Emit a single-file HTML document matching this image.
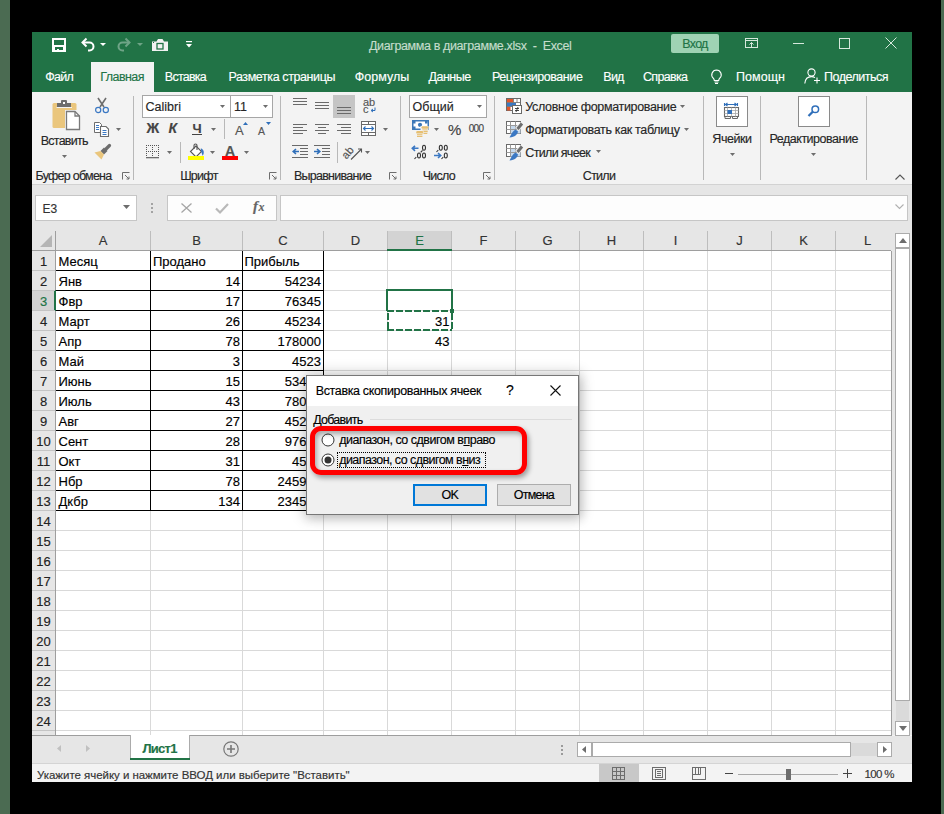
<!DOCTYPE html>
<html><head><meta charset="utf-8">
<style>
*{margin:0;padding:0;box-sizing:border-box}
html,body{width:944px;height:814px;overflow:hidden;background:#000}
body{position:relative;font-family:"Liberation Sans",sans-serif;font-size:12px;color:#262626}
.a{position:absolute}
svg.a{overflow:visible}
.t{position:absolute;white-space:nowrap;line-height:1;-webkit-text-stroke:0.15px currentColor}
</style></head><body>
<div class="a" style="left:0px;top:0px;width:10px;height:814px;background:#4b6b52"></div>
<div class="a" style="left:941px;top:0px;width:3px;height:814px;background:#4b6b52"></div>
<div class="a" style="left:32px;top:32px;width:880px;height:750px;background:#f3f3f3"></div>
<div class="a" style="left:32px;top:32px;width:880px;height:60px;background:#217346"></div>
<div class="a" style="left:91px;top:62px;width:63px;height:30px;background:#f3f3f3"></div>
<div class="a" style="left:32px;top:184px;width:880px;height:1px;background:#d2d2d2"></div>
<div class="a" style="left:32px;top:185px;width:880px;height:550px;background:#e6e6e6"></div>
<div class="a" style="left:32px;top:763px;width:880px;height:1px;background:#d4d4d4"></div>
<div class="a" style="left:32px;top:764px;width:880px;height:18px;background:#f3f3f3"></div>
<svg class="a" style="left:52px;top:38px;" width="14" height="14" viewBox="0 0 14 14"><rect x="1" y="1" width="12" height="12" fill="none" stroke="#fff" stroke-width="2"/><rect x="2" y="7" width="10" height="2" fill="#fff"/><rect x="2" y="9" width="1" height="3" fill="#fff"/><rect x="11" y="9" width="1" height="3" fill="#fff"/><rect x="5" y="11" width="2" height="1" fill="#fff"/></svg>
<svg class="a" style="left:80px;top:37px;" width="16" height="15" viewBox="0 0 16 15"><path d="M3 5.5H9.5A4 4 0 0 1 9.5 13.5H8" fill="none" stroke="#fff" stroke-width="2"/><path d="M6.5 1.5L2.5 5.5L6.5 9.5" fill="none" stroke="#fff" stroke-width="2"/></svg>
<svg class="a" style="left:100px;top:43px;" width="6" height="3" viewBox="0 0 6 3"><path d="M0 0H6L3 3Z" fill="#fff"/></svg>
<svg class="a" style="left:116px;top:37px;opacity:.35" width="16" height="15" viewBox="0 0 16 15"><path d="M13 5.5H6.5A4 4 0 0 0 6.5 13.5H8" fill="none" stroke="#fff" stroke-width="2"/><path d="M9.5 1.5L13.5 5.5L9.5 9.5" fill="none" stroke="#fff" stroke-width="2"/></svg>
<svg class="a" style="left:137px;top:43px;opacity:.35" width="6" height="3" viewBox="0 0 6 3"><path d="M0 0H6L3 3Z" fill="#fff"/></svg>
<svg class="a" style="left:152px;top:39px;" width="16" height="12" viewBox="0 0 16 12"><path d="M0 2.5H4.5L6 0H10.5L12 2.5H16V12H0Z" fill="#f2f2f2"/><rect x="5" y="4.5" width="6" height="5.5" fill="none" stroke="#217346" stroke-width="1.3"/><rect x="1" y="3" width="1" height="1" fill="#217346"/></svg>
<svg class="a" style="left:186px;top:41px;" width="6" height="7" viewBox="0 0 6 7"><rect x="0" y="0" width="6" height="1.2" fill="#fff"/><path d="M0 3H6L3 6.5Z" fill="#fff"/></svg>
<div class="t" id="tw0" style="left:369px;top:40px;font-size:12.5px;color:#c4ddcc;;letter-spacing:-0.380px">Диаграмма в диаграмме.xlsx&nbsp; - &nbsp;Excel</div>
<div class="a" style="left:671px;top:34px;width:48px;height:19px;background:#9fd3b4;border-radius:2px"></div>
<div class="t" id="tw1" style="left:495px;width:400px;text-align:center;top:38px;font-size:12.5px;color:#217346;;letter-spacing:-0.750px">Вход</div>
<svg class="a" style="left:745px;top:38px;" width="14" height="10" viewBox="0 0 14 10"><rect x="0.5" y="0.5" width="12" height="9" fill="none" stroke="#d6e8dc"/><path d="M1 2.5H12" stroke="#d6e8dc"/><path d="M6.5 9V4.5M4.5 6.5L6.5 4.5L8.5 6.5" fill="none" stroke="#d6e8dc"/></svg>
<div class="a" style="left:793px;top:43px;width:11px;height:1px;background:#d6e8dc"></div>
<svg class="a" style="left:839px;top:38px;" width="11" height="11" viewBox="0 0 11 11"><rect x="0.5" y="0.5" width="10" height="10" fill="none" stroke="#d6e8dc"/></svg>
<svg class="a" style="left:885px;top:37px;" width="12" height="12" viewBox="0 0 12 12"><path d="M0.5 0.5L11.5 11.5M11.5 0.5L0.5 11.5" stroke="#d6e8dc" stroke-width="1"/></svg>
<div class="t" id="tw2" style="left:45.3px;top:71px;font-size:12.5px;color:#ffffff;;letter-spacing:-0.750px">Файл</div>
<div class="t" id="tw3" style="left:164.8px;top:71px;font-size:12.5px;color:#ffffff;;letter-spacing:-0.750px">Вставка</div>
<div class="t" id="tw4" style="left:228.4px;top:71px;font-size:12.5px;color:#ffffff;;letter-spacing:-0.400px">Разметка страницы</div>
<div class="t" id="tw5" style="left:354.8px;top:71px;font-size:12.5px;color:#ffffff;;letter-spacing:0.000px">Формулы</div>
<div class="t" id="tw6" style="left:428.5px;top:71px;font-size:12.5px;color:#ffffff;;letter-spacing:-0.500px">Данные</div>
<div class="t" id="tw7" style="left:492px;top:71px;font-size:12.5px;color:#ffffff;;letter-spacing:-0.438px">Рецензирование</div>
<div class="t" id="tw8" style="left:603.3px;top:71px;font-size:12.5px;color:#ffffff;;letter-spacing:-0.750px">Вид</div>
<div class="t" id="tw9" style="left:642.9px;top:71px;font-size:12.5px;color:#ffffff;;letter-spacing:-0.650px">Справка</div>
<div class="t" id="tw10" style="left:736px;top:71px;font-size:12.5px;color:#ffffff;;letter-spacing:0.040px">Помощн</div>
<div class="t" id="tw11" style="left:824px;top:71px;font-size:12.5px;color:#ffffff;;letter-spacing:-0.500px">Поделиться</div>
<div class="t" id="tw12" style="left:100.3px;top:71px;font-size:12.5px;color:#217346;;letter-spacing:-0.567px">Главная</div>
<svg class="a" style="left:710px;top:69px;" width="13" height="15" viewBox="0 0 13 15"><path d="M6.5 1A4.8 4.8 0 0 0 3.2 9.2C4 10 4.3 10.6 4.3 11.5H8.7C8.7 10.6 9 10 9.8 9.2A4.8 4.8 0 0 0 6.5 1Z" fill="none" stroke="#fff" stroke-width="1.1"/><path d="M4.5 13H8.5M5 14.5H8" stroke="#fff" stroke-width="1"/></svg>
<svg class="a" style="left:804px;top:68px;" width="17" height="16" viewBox="0 0 17 16"><circle cx="7.5" cy="4.5" r="3.6" fill="none" stroke="#fff" stroke-width="1.1"/><path d="M0.8 15.5C1.2 11 3.8 8.6 7.5 8.6C9 8.6 10 9 11 9.6" fill="none" stroke="#fff" stroke-width="1.1"/><path d="M13 9.5V15.5M10 12.5H16" stroke="#fff" stroke-width="1.1"/></svg>
<svg class="a" style="left:52px;top:100px;" width="28" height="30" viewBox="0 0 28 30"><rect x="0.5" y="3" width="24" height="25" rx="1.5" fill="#eac67d"/><rect x="5" y="3" width="14" height="4" fill="#6d6d6d"/><rect x="9" y="0" width="6" height="4" rx="1" fill="#6d6d6d"/><rect x="11" y="2" width="2" height="2" fill="#fff"/><path d="M4.5 7.5H20" stroke="#f3f3f3" stroke-width="1"/><path d="M13 10H28V30H13Z" fill="#f3f3f3"/><path d="M14.5 11.5H23L27.5 16V29.5H14.5Z" fill="#fff" stroke="#7a7a7a" stroke-width="1.3"/><path d="M23 11.5V16H27.5" fill="none" stroke="#7a7a7a" stroke-width="1.3"/></svg>
<div class="t" id="tw13" style="left:-135.8px;width:400px;text-align:center;top:135px;font-size:12.5px;color:#262626;;letter-spacing:-0.750px">Вставить</div>
<svg class="a" style="left:62px;top:155px;" width="5" height="3" viewBox="0 0 5 3"><path d="M0 0H5L2.5 3Z" fill="#6d6d6d"/></svg>
<svg class="a" style="left:94px;top:97px;" width="16" height="16" viewBox="0 0 16 16"><path d="M4 1L10 10M12 1L6 10" stroke="#6d6d6d" stroke-width="1.6"/><circle cx="4.2" cy="13" r="2.6" fill="none" stroke="#3b78c3" stroke-width="1.2"/><circle cx="11.8" cy="13" r="2.6" fill="none" stroke="#3b78c3" stroke-width="1.2"/></svg>
<svg class="a" style="left:94px;top:122px;" width="16" height="15" viewBox="0 0 16 15"><path d="M0.5 0.5H5.5L7.5 2.5V10.5H0.5Z" fill="#fff" stroke="#6d6d6d" stroke-width="1"/><path d="M2 3.5H5M2 5.5H5M2 7.5H5" stroke="#3b78c3" stroke-width="1"/><path d="M6.5 4.5H12L14.5 7V14.5H6.5Z" fill="#fff" stroke="#6d6d6d" stroke-width="1.1"/><path d="M8.5 8.5H12.5M8.5 10.5H12.5M8.5 12.5H12.5" stroke="#3b78c3" stroke-width="1"/></svg>
<svg class="a" style="left:116px;top:128px;" width="5" height="3" viewBox="0 0 5 3"><path d="M0 0H5L2.5 3Z" fill="#6d6d6d"/></svg>
<svg class="a" style="left:94px;top:144px;" width="17" height="16" viewBox="0 0 17 16"><path d="M12 5L15.5 1.5" stroke="#6d6d6d" stroke-width="3.2" stroke-linecap="round"/><path d="M6.5 7L10 3.5L13.5 7L10 10.5Z" fill="#6d6d6d"/><path d="M0.5 8.5L6.5 7L10 10.5L7.5 15.5Z" fill="#eac67d"/></svg>
<div class="t" id="tw14" style="left:-126.5px;width:400px;text-align:center;top:170px;font-size:12.5px;color:#262626;;letter-spacing:-0.750px">Буфер обмена</div>
<svg class="a" style="left:122px;top:172px;" width="8" height="8" viewBox="0 0 8 8"><path d="M0.5 7.5V0.5H7.5" fill="none" stroke="#6d6d6d" stroke-width="1"/><path d="M3 3L7 7M7 4.5V7H4.5" fill="none" stroke="#6d6d6d" stroke-width="1"/></svg>
<div class="a" style="left:133px;top:96px;width:1px;height:84px;background:#b8b8b8"></div>
<div class="a" style="left:142px;top:95px;width:131px;height:23px;background:#fff;border:1px solid #a6a6a6"></div>
<div class="a" style="left:230px;top:95px;width:1px;height:23px;background:#a6a6a6"></div>
<div class="t" style="left:145.5px;top:101px;font-size:12.5px;color:#262626;">Calibri</div>
<svg class="a" style="left:220px;top:105px;" width="5" height="3" viewBox="0 0 5 3"><path d="M0 0H5L2.5 3Z" fill="#6d6d6d"/></svg>
<div class="t" style="left:234px;top:101px;font-size:12.5px;color:#262626;">11</div>
<svg class="a" style="left:263px;top:105px;" width="5" height="3" viewBox="0 0 5 3"><path d="M0 0H5L2.5 3Z" fill="#6d6d6d"/></svg>
<div class="t" style="left:146.5px;top:121px;font-size:14px;color:#444;font-weight:bold">Ж</div>
<div class="t" style="left:168.5px;top:121px;font-size:14px;color:#444;font-weight:bold;font-style:italic">К</div>
<div class="t" style="left:192.5px;top:122px;font-size:13px;color:#444;font-weight:bold">Ч</div>
<div class="a" style="left:192px;top:134px;width:10px;height:1px;background:#444"></div>
<svg class="a" style="left:211px;top:128px;" width="5" height="3" viewBox="0 0 5 3"><path d="M0 0H5L2.5 3Z" fill="#6d6d6d"/></svg>
<div class="a" style="left:224px;top:119px;width:1px;height:20px;background:#b8b8b8"></div>
<div class="t" style="left:235px;top:124px;font-size:13px;color:#555;">A</div>
<svg class="a" style="left:243px;top:122px;" width="5" height="3" viewBox="0 0 5 3"><path d="M0 3H5L2.5 0Z" fill="#2f6fba"/></svg>
<div class="t" style="left:258px;top:126px;font-size:10.5px;color:#555;">A</div>
<svg class="a" style="left:266px;top:122px;" width="5" height="3" viewBox="0 0 5 3"><path d="M0 0H5L2.5 3Z" fill="#2f6fba"/></svg>
<svg class="a" style="left:146px;top:145px;" width="14" height="14" viewBox="0 0 14 14"><rect x="0" y="0" width="1" height="1" fill="#555"/><rect x="0" y="6" width="1" height="1" fill="#555"/><rect x="2" y="0" width="1" height="1" fill="#555"/><rect x="2" y="6" width="1" height="1" fill="#555"/><rect x="4" y="0" width="1" height="1" fill="#555"/><rect x="4" y="6" width="1" height="1" fill="#555"/><rect x="6" y="0" width="1" height="1" fill="#555"/><rect x="6" y="6" width="1" height="1" fill="#555"/><rect x="8" y="0" width="1" height="1" fill="#555"/><rect x="8" y="6" width="1" height="1" fill="#555"/><rect x="10" y="0" width="1" height="1" fill="#555"/><rect x="10" y="6" width="1" height="1" fill="#555"/><rect x="12" y="0" width="1" height="1" fill="#555"/><rect x="12" y="6" width="1" height="1" fill="#555"/><rect x="0" y="2" width="1" height="1" fill="#555"/><rect x="0" y="4" width="1" height="1" fill="#555"/><rect x="0" y="8" width="1" height="1" fill="#555"/><rect x="0" y="10" width="1" height="1" fill="#555"/><rect x="6" y="2" width="1" height="1" fill="#555"/><rect x="6" y="4" width="1" height="1" fill="#555"/><rect x="6" y="8" width="1" height="1" fill="#555"/><rect x="6" y="10" width="1" height="1" fill="#555"/><rect x="12" y="2" width="1" height="1" fill="#555"/><rect x="12" y="4" width="1" height="1" fill="#555"/><rect x="12" y="8" width="1" height="1" fill="#555"/><rect x="12" y="10" width="1" height="1" fill="#555"/><rect x="0" y="12" width="13" height="1.3" fill="#6d6d6d"/></svg>
<svg class="a" style="left:167px;top:151px;" width="5" height="3" viewBox="0 0 5 3"><path d="M0 0H5L2.5 3Z" fill="#6d6d6d"/></svg>
<div class="a" style="left:180px;top:142px;width:1px;height:21px;background:#b8b8b8"></div>
<svg class="a" style="left:188px;top:143px;" width="17" height="18" viewBox="0 0 17 18"><path d="M8 3L2.5 8.5L8 14L13.5 8.5Z" fill="#fff" stroke="#555" stroke-width="1.1"/><path d="M6 6V2.5A1.5 1.5 0 0 1 9 2.5V7" fill="none" stroke="#555" stroke-width="1.1"/><path d="M12.8 5.2C15.8 6.5 16.8 9.5 14.6 12.8L13.2 8.5Z" fill="#3b78c3"/><rect x="0" y="13" width="16" height="4" fill="#ffff00"/></svg>
<svg class="a" style="left:210px;top:151px;" width="5" height="3" viewBox="0 0 5 3"><path d="M0 0H5L2.5 3Z" fill="#6d6d6d"/></svg>
<div class="t" style="left:225px;top:144px;font-size:14px;color:#555;font-weight:bold">A</div>
<div class="a" style="left:222px;top:156px;width:16px;height:4px;background:#ff0000"></div>
<svg class="a" style="left:244px;top:151px;" width="5" height="3" viewBox="0 0 5 3"><path d="M0 0H5L2.5 3Z" fill="#6d6d6d"/></svg>
<div class="t" id="tw15" style="left:-1.0999999999999943px;width:400px;text-align:center;top:170px;font-size:12.5px;color:#262626;;letter-spacing:-0.725px">Шрифт</div>
<svg class="a" style="left:269px;top:172px;" width="8" height="8" viewBox="0 0 8 8"><path d="M0.5 7.5V0.5H7.5" fill="none" stroke="#6d6d6d" stroke-width="1"/><path d="M3 3L7 7M7 4.5V7H4.5" fill="none" stroke="#6d6d6d" stroke-width="1"/></svg>
<div class="a" style="left:280px;top:96px;width:1px;height:84px;background:#b8b8b8"></div>
<div class="a" style="left:293px;top:98px;width:14px;height:1px;background:#6a6a6a"></div>
<div class="a" style="left:293px;top:101px;width:14px;height:1px;background:#6a6a6a"></div>
<div class="a" style="left:293px;top:104px;width:14px;height:1px;background:#6a6a6a"></div>
<div class="a" style="left:315px;top:102px;width:14px;height:1px;background:#6a6a6a"></div>
<div class="a" style="left:315px;top:105px;width:14px;height:1px;background:#6a6a6a"></div>
<div class="a" style="left:315px;top:108px;width:14px;height:1px;background:#6a6a6a"></div>
<div class="a" style="left:333px;top:95px;width:22px;height:23px;background:#c5c5c5"></div>
<div class="a" style="left:337px;top:107px;width:14px;height:1px;background:#6a6a6a"></div>
<div class="a" style="left:337px;top:110px;width:14px;height:1px;background:#6a6a6a"></div>
<div class="a" style="left:337px;top:113px;width:14px;height:1px;background:#6a6a6a"></div>
<div class="t" style="left:363px;top:97px;font-size:11px;color:#555;">ab</div>
<div class="t" style="left:363px;top:104px;font-size:11px;color:#555;">c</div>
<svg class="a" style="left:370px;top:107px;" width="6" height="6" viewBox="0 0 6 6"><path d="M5 0.5V3.5H1.5M3 2L1 3.5L3 5" fill="none" stroke="#2f6fba" stroke-width="1"/></svg>
<div class="a" style="left:293px;top:124px;width:14px;height:1px;background:#6a6a6a"></div>
<div class="a" style="left:293px;top:127px;width:10px;height:1px;background:#6a6a6a"></div>
<div class="a" style="left:293px;top:130px;width:14px;height:1px;background:#6a6a6a"></div>
<div class="a" style="left:293px;top:133px;width:10px;height:1px;background:#6a6a6a"></div>
<div class="a" style="left:315px;top:124px;width:14px;height:1px;background:#6a6a6a"></div>
<div class="a" style="left:318px;top:127px;width:8px;height:1px;background:#6a6a6a"></div>
<div class="a" style="left:315px;top:130px;width:14px;height:1px;background:#6a6a6a"></div>
<div class="a" style="left:318px;top:133px;width:8px;height:1px;background:#6a6a6a"></div>
<div class="a" style="left:337px;top:124px;width:14px;height:1px;background:#6a6a6a"></div>
<div class="a" style="left:341px;top:127px;width:10px;height:1px;background:#6a6a6a"></div>
<div class="a" style="left:337px;top:130px;width:14px;height:1px;background:#6a6a6a"></div>
<div class="a" style="left:341px;top:133px;width:10px;height:1px;background:#6a6a6a"></div>
<svg class="a" style="left:361px;top:121px;" width="15" height="15" viewBox="0 0 15 15"><rect x="0.5" y="0.5" width="14" height="14" fill="#fff" stroke="#6a6a6a"/><path d="M0.5 3.5H14.5M0.5 11.5H14.5M7.5 0.5V3.5M7.5 11.5V14.5" stroke="#6a6a6a"/><path d="M2.5 7.5H12.5M4.5 5.5L2.5 7.5L4.5 9.5M10.5 5.5L12.5 7.5L10.5 9.5" fill="none" stroke="#2f6fba" stroke-width="1.1"/></svg>
<svg class="a" style="left:383px;top:128px;" width="5" height="3" viewBox="0 0 5 3"><path d="M0 0H5L2.5 3Z" fill="#6d6d6d"/></svg>
<div class="a" style="left:292px;top:145px;width:16px;height:1px;background:#6a6a6a"></div>
<div class="a" style="left:300px;top:148px;width:8px;height:1px;background:#6a6a6a"></div>
<div class="a" style="left:300px;top:151px;width:8px;height:1px;background:#6a6a6a"></div>
<div class="a" style="left:300px;top:154px;width:8px;height:1px;background:#6a6a6a"></div>
<div class="a" style="left:292px;top:157px;width:16px;height:1px;background:#6a6a6a"></div>
<svg class="a" style="left:292px;top:148px;" width="7" height="7" viewBox="0 0 7 7"><path d="M7 3.5H1.5M4 1L1.2 3.5L4 6" fill="none" stroke="#2f6fba" stroke-width="1.6"/></svg>
<div class="a" style="left:314px;top:145px;width:16px;height:1px;background:#6a6a6a"></div>
<div class="a" style="left:322px;top:148px;width:8px;height:1px;background:#6a6a6a"></div>
<div class="a" style="left:322px;top:151px;width:8px;height:1px;background:#6a6a6a"></div>
<div class="a" style="left:322px;top:154px;width:8px;height:1px;background:#6a6a6a"></div>
<div class="a" style="left:314px;top:157px;width:16px;height:1px;background:#6a6a6a"></div>
<svg class="a" style="left:314px;top:148px;" width="7" height="7" viewBox="0 0 7 7"><path d="M0 3.5H5.5M3 1L5.8 3.5L3 6" fill="none" stroke="#2f6fba" stroke-width="1.6"/></svg>
<div class="a" style="left:337px;top:142px;width:1px;height:21px;background:#b8b8b8"></div>
<div class="t" style="left:343px;top:145px;font-size:11px;color:#555;transform:rotate(-50deg);transform-origin:8px 8px">ab</div>
<svg class="a" style="left:350px;top:148px;" width="13" height="12" viewBox="0 0 13 12"><path d="M1 11.5L11.5 1M8 1H11.5V4.5" fill="none" stroke="#555" stroke-width="1.1"/></svg>
<svg class="a" style="left:365px;top:151px;" width="5" height="3" viewBox="0 0 5 3"><path d="M0 0H5L2.5 3Z" fill="#6d6d6d"/></svg>
<div class="t" id="tw16" style="left:132.5px;width:400px;text-align:center;top:170px;font-size:12.5px;color:#262626;;letter-spacing:-0.736px">Выравнивание</div>
<svg class="a" style="left:389px;top:172px;" width="8" height="8" viewBox="0 0 8 8"><path d="M0.5 7.5V0.5H7.5" fill="none" stroke="#6d6d6d" stroke-width="1"/><path d="M3 3L7 7M7 4.5V7H4.5" fill="none" stroke="#6d6d6d" stroke-width="1"/></svg>
<div class="a" style="left:400px;top:96px;width:1px;height:84px;background:#b8b8b8"></div>
<div class="a" style="left:409px;top:95px;width:78px;height:23px;background:#fff;border:1px solid #a6a6a6"></div>
<div class="t" style="left:412.5px;top:101px;font-size:12.5px;color:#262626;">Общий</div>
<svg class="a" style="left:477px;top:105px;" width="5" height="3" viewBox="0 0 5 3"><path d="M0 0H5L2.5 3Z" fill="#6d6d6d"/></svg>
<svg class="a" style="left:412px;top:120px;" width="17" height="18" viewBox="0 0 17 18"><rect x="0.75" y="0.75" width="15.5" height="8.5" fill="#fff" stroke="#3c78b8" stroke-width="1.5"/><rect x="1" y="1" width="2.5" height="2.5" fill="#3c78b8"/><rect x="13" y="1" width="2.5" height="2.5" fill="#3c78b8"/><rect x="1" y="6.5" width="2.5" height="2.5" fill="#3c78b8"/><circle cx="8" cy="4.8" r="2.1" fill="#3c78b8"/><rect x="8.5" y="6" width="8" height="11" fill="#f3f3f3"/><rect x="9.5" y="6.2" width="7" height="2.6" rx="1.2" fill="#e6bf72"/><rect x="10.3" y="9.4" width="5.4" height="1" fill="#e6bf72"/><rect x="10.3" y="11" width="5.4" height="1.3" fill="#e6bf72"/><rect x="10.8" y="13" width="4.5" height="1" fill="#e6bf72"/><rect x="3.5" y="10.5" width="8" height="7.5" fill="#f3f3f3"/><rect x="4.2" y="11" width="7" height="2.6" rx="1.2" fill="#e6bf72"/><rect x="5" y="14.2" width="5.4" height="1" fill="#e6bf72"/><rect x="5" y="15.8" width="5.4" height="1.2" fill="#e6bf72"/></svg>
<svg class="a" style="left:434px;top:128px;" width="5" height="3" viewBox="0 0 5 3"><path d="M0 0H5L2.5 3Z" fill="#6d6d6d"/></svg>
<div class="t" style="left:448px;top:122px;font-size:15px;color:#444;">%</div>
<div class="t" id="tw17" style="left:468.8px;top:124px;font-size:10px;color:#444;transform:scaleY(1.1);transform-origin:0 100%;letter-spacing:-0.750px">000</div>
<svg class="a" style="left:408px;top:140px;" width="44" height="22" viewBox="0 0 44 22"><path d="M10.5 8.3H4.5M7 5.8L4.3 8.3L7 10.8" fill="none" stroke="#3b78c3" stroke-width="1.6"/><ellipse cx="16" cy="7.8" rx="1.5" ry="2.5" fill="none" stroke="#333" stroke-width="1.1"/><path d="M12.7 12.3L14.5 10.3" stroke="#333" stroke-width="1.1"/><path d="M6.5 19L8.3 17" stroke="#333" stroke-width="1.1"/><ellipse cx="11" cy="15.5" rx="1.5" ry="2.5" fill="none" stroke="#333" stroke-width="1.1"/><ellipse cx="16" cy="15.5" rx="1.5" ry="2.5" fill="none" stroke="#333" stroke-width="1.1"/><path d="M28.5 12L30.3 10" stroke="#333" stroke-width="1.1"/><ellipse cx="32.8" cy="7.8" rx="1.5" ry="2.5" fill="none" stroke="#333" stroke-width="1.1"/><ellipse cx="37.8" cy="7.8" rx="1.5" ry="2.5" fill="none" stroke="#333" stroke-width="1.1"/><path d="M26 15.5H32.5M30 13L32.7 15.5L30 18" fill="none" stroke="#3b78c3" stroke-width="1.6"/><path d="M33.5 19L35.3 17" stroke="#333" stroke-width="1.1"/><ellipse cx="37.8" cy="15.5" rx="1.5" ry="2.5" fill="none" stroke="#333" stroke-width="1.1"/></svg>
<div class="t" id="tw18" style="left:238.8px;width:400px;text-align:center;top:170px;font-size:12.5px;color:#262626;;letter-spacing:-0.750px">Число</div>
<svg class="a" style="left:483px;top:172px;" width="8" height="8" viewBox="0 0 8 8"><path d="M0.5 7.5V0.5H7.5" fill="none" stroke="#6d6d6d" stroke-width="1"/><path d="M3 3L7 7M7 4.5V7H4.5" fill="none" stroke="#6d6d6d" stroke-width="1"/></svg>
<div class="a" style="left:494px;top:96px;width:1px;height:84px;background:#b8b8b8"></div>
<svg class="a" style="left:506px;top:98px;" width="17" height="16" viewBox="0 0 17 16"><rect x="0.5" y="0.5" width="14" height="12" fill="#fff" stroke="#6a6a6a"/><rect x="1" y="1" width="6" height="3.5" fill="#e2562b"/><rect x="1" y="5" width="9" height="3.5" fill="#3b78c3"/><rect x="1" y="9" width="3.5" height="3.5" fill="#e2562b"/><path d="M7.5 1V4.5M11 1V4.5M0.5 4.5H14.5M0.5 8.5H7" stroke="#6a6a6a" stroke-width="0.8"/><rect x="6.5" y="7.5" width="9" height="8" fill="#fff" stroke="#6a6a6a"/><path d="M9 10.5H13M9 12.5H13M12 9L10 14" stroke="#333" stroke-width="0.9"/></svg>
<div class="t" id="tw19" style="left:525.3px;top:101px;font-size:12.5px;color:#262626;;letter-spacing:-0.350px">Условное форматирование</div>
<svg class="a" style="left:680px;top:105px;" width="5" height="3" viewBox="0 0 5 3"><path d="M0 0H5L2.5 3Z" fill="#6d6d6d"/></svg>
<svg class="a" style="left:506px;top:121px;" width="17" height="17" viewBox="0 0 17 17"><rect x="0.5" y="0.5" width="14" height="12" fill="#fff" stroke="#6a6a6a"/><rect x="4.5" y="4.5" width="10" height="8" fill="#c5d9ee"/><path d="M4.5 0.5V12.5M9.5 0.5V12.5M0.5 4.5H14.5M0.5 8.5H14.5" stroke="#9a9a9a" stroke-width="1"/><path d="M16 2.5L11 8.5" stroke="#f3f3f3" stroke-width="5"/><path d="M16 2.5L11.5 8" stroke="#6d6d6d" stroke-width="3"/><path d="M9.5 8.5L12 10.5C11.5 13.5 9 16 3.5 16.5C5.5 13 6.5 10 9.5 8.5Z" fill="#3b78c3"/></svg>
<div class="t" id="tw20" style="left:525.3px;top:124px;font-size:12.5px;color:#262626;;letter-spacing:-0.333px">Форматировать как таблицу</div>
<svg class="a" style="left:684px;top:128px;" width="5" height="3" viewBox="0 0 5 3"><path d="M0 0H5L2.5 3Z" fill="#6d6d6d"/></svg>
<svg class="a" style="left:506px;top:144px;" width="17" height="17" viewBox="0 0 17 17"><rect x="0.5" y="0.5" width="14" height="12" fill="#fff" stroke="#6a6a6a"/><rect x="4.5" y="4.5" width="10" height="8" fill="#c5d9ee"/><path d="M4.5 0.5V12.5M9.5 0.5V12.5M0.5 4.5H14.5M0.5 8.5H14.5" stroke="#9a9a9a" stroke-width="1"/><path d="M16 2.5L11 8.5" stroke="#f3f3f3" stroke-width="5"/><path d="M16 2.5L11.5 8" stroke="#6d6d6d" stroke-width="3"/><path d="M9.5 8.5L12 10.5C11.5 13.5 9 16 3.5 16.5C5.5 13 6.5 10 9.5 8.5Z" fill="#3b78c3"/></svg>
<div class="t" id="tw21" style="left:525.3px;top:147px;font-size:12.5px;color:#262626;;letter-spacing:-0.670px">Стили ячеек</div>
<svg class="a" style="left:596px;top:150px;" width="5" height="3" viewBox="0 0 5 3"><path d="M0 0H5L2.5 3Z" fill="#6d6d6d"/></svg>
<div class="t" id="tw22" style="left:399px;width:400px;text-align:center;top:170px;font-size:12.5px;color:#262626;;letter-spacing:-0.750px">Стили</div>
<div class="a" style="left:703px;top:96px;width:1px;height:84px;background:#b8b8b8"></div>
<div class="a" style="left:716px;top:96px;width:32px;height:31px;background:#fff;border:1px solid #8a8a8a"></div>
<svg class="a" style="left:724px;top:103px;" width="16" height="18" viewBox="0 0 16 18"><path d="M0.5 0V3M13.5 0V3M1.5 1.5H12.5M3.5 0L1.5 1.5L3.5 3M10.5 0L12.5 1.5L10.5 3" fill="none" stroke="#2f6fba" stroke-width="1.1"/><rect x="0.5" y="4.5" width="14" height="9" fill="#fff" stroke="#6a6a6a" stroke-width="1.1"/><path d="M3.5 4.5V13.5M7.5 4.5V13.5M11.5 4.5V13.5M0.5 7.5H14.5M0.5 10.5H14.5" stroke="#aaa" stroke-width="0.8"/><rect x="3.5" y="7" width="4.5" height="4" fill="#2f6fba"/><path d="M1 14V15.5H6.5V14M8.5 14V15.5H13.5V14" fill="none" stroke="#6a6a6a"/></svg>
<div class="t" id="tw23" style="left:531.9px;width:400px;text-align:center;top:133px;font-size:12.5px;color:#262626;;letter-spacing:-0.480px">Ячейки</div>
<svg class="a" style="left:730px;top:153px;" width="5" height="3" viewBox="0 0 5 3"><path d="M0 0H5L2.5 3Z" fill="#6d6d6d"/></svg>
<div class="a" style="left:760px;top:96px;width:1px;height:84px;background:#b8b8b8"></div>
<div class="a" style="left:798px;top:96px;width:32px;height:31px;background:#fff;border:1px solid #8a8a8a"></div>
<svg class="a" style="left:806px;top:104px;" width="14" height="14" viewBox="0 0 14 14"><circle cx="9.3" cy="5.2" r="3.3" fill="none" stroke="#2f6fba" stroke-width="1.5"/><path d="M7 7.5L2.5 12" stroke="#2f6fba" stroke-width="2.3"/></svg>
<div class="t" id="tw24" style="left:613.7px;width:400px;text-align:center;top:133px;font-size:12.5px;color:#262626;;letter-spacing:-0.492px">Редактирование</div>
<svg class="a" style="left:811px;top:153px;" width="5" height="3" viewBox="0 0 5 3"><path d="M0 0H5L2.5 3Z" fill="#6d6d6d"/></svg>
<div class="a" style="left:866px;top:96px;width:1px;height:84px;background:#b8b8b8"></div>
<svg class="a" style="left:895px;top:174px;" width="10" height="6" viewBox="0 0 10 6"><path d="M0.5 5.5L5 1L9.5 5.5" fill="none" stroke="#555" stroke-width="1.1"/></svg>
<div class="a" style="left:35px;top:195px;width:102px;height:26px;background:#fff;border:1px solid #c6c6c6"></div>
<div class="t" style="left:42.5px;top:203px;font-size:12px;color:#333;">E3</div>
<svg class="a" style="left:123px;top:205px;" width="7" height="4" viewBox="0 0 7 4"><path d="M0 0H7L3.5 4Z" fill="#6d6d6d"/></svg>
<div class="a" style="left:151px;top:203px;width:2px;height:2px;background:#a3a3a3"></div>
<div class="a" style="left:151px;top:207px;width:2px;height:2px;background:#a3a3a3"></div>
<div class="a" style="left:151px;top:211px;width:2px;height:2px;background:#a3a3a3"></div>
<div class="a" style="left:167px;top:195px;width:110px;height:26px;background:#fdfdfd;border:1px solid #c6c6c6"></div>
<svg class="a" style="left:181px;top:203px;" width="11" height="10" viewBox="0 0 11 10"><path d="M0.5 0.5L10.5 9.5M10.5 0.5L0.5 9.5" stroke="#a6a6a6" stroke-width="1.3"/></svg>
<svg class="a" style="left:215px;top:203px;" width="14" height="11" viewBox="0 0 14 11"><path d="M1 5.5L5 9.5L13 1" fill="none" stroke="#b9b9b9" stroke-width="2.2"/></svg>
<div class="t" style="left:253px;top:199px;font-size:15px;color:#666;font-family:Liberation Serif"><b><i>f</i></b><span style="font-size:12px;font-style:italic;font-weight:bold;margin-left:0.5px">x</span></div>
<div class="a" style="left:280px;top:195px;width:628px;height:26px;background:#fdfdfd;border:1px solid #c6c6c6"></div>
<svg class="a" style="left:895px;top:204px;" width="9" height="5" viewBox="0 0 9 5"><path d="M0.5 0.5L4.5 4.5L8.5 0.5" fill="none" stroke="#b0b0b0" stroke-width="1.1"/></svg>
<svg class="a" style="left:40px;top:235px;" width="12" height="12" viewBox="0 0 12 12"><path d="M12 0V12H0Z" fill="#b5b5b5"/></svg>
<div class="a" style="left:388px;top:231px;width:63px;height:19px;background:#d3d3d3"></div>
<div class="a" style="left:55px;top:231px;width:1px;height:19px;background:#bdbdbd"></div>
<div class="a" style="left:150px;top:231px;width:1px;height:19px;background:#bdbdbd"></div>
<div class="a" style="left:242px;top:231px;width:1px;height:19px;background:#bdbdbd"></div>
<div class="a" style="left:323px;top:231px;width:1px;height:19px;background:#bdbdbd"></div>
<div class="a" style="left:387px;top:231px;width:1px;height:19px;background:#bdbdbd"></div>
<div class="a" style="left:451px;top:231px;width:1px;height:19px;background:#bdbdbd"></div>
<div class="a" style="left:515px;top:231px;width:1px;height:19px;background:#bdbdbd"></div>
<div class="a" style="left:579px;top:231px;width:1px;height:19px;background:#bdbdbd"></div>
<div class="a" style="left:643px;top:231px;width:1px;height:19px;background:#bdbdbd"></div>
<div class="a" style="left:707px;top:231px;width:1px;height:19px;background:#bdbdbd"></div>
<div class="a" style="left:771px;top:231px;width:1px;height:19px;background:#bdbdbd"></div>
<div class="a" style="left:835px;top:231px;width:1px;height:19px;background:#bdbdbd"></div>
<div class="t" style="left:-97.0px;width:400px;text-align:center;top:234px;font-size:13px;color:#333;">A</div>
<div class="t" style="left:-3.5px;width:400px;text-align:center;top:234px;font-size:13px;color:#333;">B</div>
<div class="t" style="left:83.0px;width:400px;text-align:center;top:234px;font-size:13px;color:#333;">C</div>
<div class="t" style="left:155.5px;width:400px;text-align:center;top:234px;font-size:13px;color:#333;">D</div>
<div class="t" style="left:219.5px;width:400px;text-align:center;top:234px;font-size:13px;color:#217346;">E</div>
<div class="t" style="left:283.5px;width:400px;text-align:center;top:234px;font-size:13px;color:#333;">F</div>
<div class="t" style="left:347.5px;width:400px;text-align:center;top:234px;font-size:13px;color:#333;">G</div>
<div class="t" style="left:411.5px;width:400px;text-align:center;top:234px;font-size:13px;color:#333;">H</div>
<div class="t" style="left:475.5px;width:400px;text-align:center;top:234px;font-size:13px;color:#333;">I</div>
<div class="t" style="left:539.5px;width:400px;text-align:center;top:234px;font-size:13px;color:#333;">J</div>
<div class="t" style="left:603.5px;width:400px;text-align:center;top:234px;font-size:13px;color:#333;">K</div>
<div class="t" style="left:667.5px;width:400px;text-align:center;top:234px;font-size:13px;color:#333;">L</div>
<div class="a" style="left:32px;top:250px;width:859px;height:1px;background:#9e9e9e"></div>
<div class="a" style="left:387px;top:249px;width:65px;height:2px;background:#217346"></div>
<div class="a" style="left:55px;top:231px;width:1px;height:504px;background:#9e9e9e"></div>
<div class="a" style="left:32px;top:291px;width:23px;height:19px;background:#d3d3d3"></div>
<div class="a" style="left:54px;top:290px;width:2px;height:21px;background:#217346"></div>
<div class="a" style="left:32px;top:270px;width:23px;height:1px;background:#c4c4c4"></div>
<div class="t" style="left:-156.5px;width:400px;text-align:center;top:255px;font-size:13px;color:#222;">1</div>
<div class="a" style="left:32px;top:290px;width:23px;height:1px;background:#c4c4c4"></div>
<div class="t" style="left:-156.5px;width:400px;text-align:center;top:275px;font-size:13px;color:#222;">2</div>
<div class="a" style="left:32px;top:310px;width:23px;height:1px;background:#c4c4c4"></div>
<div class="t" style="left:-156.5px;width:400px;text-align:center;top:295px;font-size:13px;color:#217346;">3</div>
<div class="a" style="left:32px;top:330px;width:23px;height:1px;background:#c4c4c4"></div>
<div class="t" style="left:-156.5px;width:400px;text-align:center;top:315px;font-size:13px;color:#222;">4</div>
<div class="a" style="left:32px;top:350px;width:23px;height:1px;background:#c4c4c4"></div>
<div class="t" style="left:-156.5px;width:400px;text-align:center;top:335px;font-size:13px;color:#222;">5</div>
<div class="a" style="left:32px;top:370px;width:23px;height:1px;background:#c4c4c4"></div>
<div class="t" style="left:-156.5px;width:400px;text-align:center;top:355px;font-size:13px;color:#222;">6</div>
<div class="a" style="left:32px;top:390px;width:23px;height:1px;background:#c4c4c4"></div>
<div class="t" style="left:-156.5px;width:400px;text-align:center;top:375px;font-size:13px;color:#222;">7</div>
<div class="a" style="left:32px;top:410px;width:23px;height:1px;background:#c4c4c4"></div>
<div class="t" style="left:-156.5px;width:400px;text-align:center;top:395px;font-size:13px;color:#222;">8</div>
<div class="a" style="left:32px;top:430px;width:23px;height:1px;background:#c4c4c4"></div>
<div class="t" style="left:-156.5px;width:400px;text-align:center;top:415px;font-size:13px;color:#222;">9</div>
<div class="a" style="left:32px;top:450px;width:23px;height:1px;background:#c4c4c4"></div>
<div class="t" style="left:-156.5px;width:400px;text-align:center;top:435px;font-size:13px;color:#222;">10</div>
<div class="a" style="left:32px;top:470px;width:23px;height:1px;background:#c4c4c4"></div>
<div class="t" style="left:-156.5px;width:400px;text-align:center;top:455px;font-size:13px;color:#222;">11</div>
<div class="a" style="left:32px;top:490px;width:23px;height:1px;background:#c4c4c4"></div>
<div class="t" style="left:-156.5px;width:400px;text-align:center;top:475px;font-size:13px;color:#222;">12</div>
<div class="a" style="left:32px;top:510px;width:23px;height:1px;background:#c4c4c4"></div>
<div class="t" style="left:-156.5px;width:400px;text-align:center;top:495px;font-size:13px;color:#222;">13</div>
<div class="a" style="left:32px;top:530px;width:23px;height:1px;background:#c4c4c4"></div>
<div class="t" style="left:-156.5px;width:400px;text-align:center;top:515px;font-size:13px;color:#222;">14</div>
<div class="a" style="left:32px;top:550px;width:23px;height:1px;background:#c4c4c4"></div>
<div class="t" style="left:-156.5px;width:400px;text-align:center;top:535px;font-size:13px;color:#222;">15</div>
<div class="a" style="left:32px;top:570px;width:23px;height:1px;background:#c4c4c4"></div>
<div class="t" style="left:-156.5px;width:400px;text-align:center;top:555px;font-size:13px;color:#222;">16</div>
<div class="a" style="left:32px;top:590px;width:23px;height:1px;background:#c4c4c4"></div>
<div class="t" style="left:-156.5px;width:400px;text-align:center;top:575px;font-size:13px;color:#222;">17</div>
<div class="a" style="left:32px;top:610px;width:23px;height:1px;background:#c4c4c4"></div>
<div class="t" style="left:-156.5px;width:400px;text-align:center;top:595px;font-size:13px;color:#222;">18</div>
<div class="a" style="left:32px;top:630px;width:23px;height:1px;background:#c4c4c4"></div>
<div class="t" style="left:-156.5px;width:400px;text-align:center;top:615px;font-size:13px;color:#222;">19</div>
<div class="a" style="left:32px;top:650px;width:23px;height:1px;background:#c4c4c4"></div>
<div class="t" style="left:-156.5px;width:400px;text-align:center;top:635px;font-size:13px;color:#222;">20</div>
<div class="a" style="left:32px;top:670px;width:23px;height:1px;background:#c4c4c4"></div>
<div class="t" style="left:-156.5px;width:400px;text-align:center;top:655px;font-size:13px;color:#222;">21</div>
<div class="a" style="left:32px;top:690px;width:23px;height:1px;background:#c4c4c4"></div>
<div class="t" style="left:-156.5px;width:400px;text-align:center;top:675px;font-size:13px;color:#222;">22</div>
<div class="a" style="left:32px;top:710px;width:23px;height:1px;background:#c4c4c4"></div>
<div class="t" style="left:-156.5px;width:400px;text-align:center;top:695px;font-size:13px;color:#222;">23</div>
<div class="a" style="left:32px;top:730px;width:23px;height:1px;background:#c4c4c4"></div>
<div class="t" style="left:-156.5px;width:400px;text-align:center;top:715px;font-size:13px;color:#222;">24</div>
<div class="a" style="left:56px;top:251px;width:835px;height:484px;background:#fff"></div>
<div class="a" style="left:150px;top:251px;width:1px;height:484px;background:#d9d9d9"></div>
<div class="a" style="left:242px;top:251px;width:1px;height:484px;background:#d9d9d9"></div>
<div class="a" style="left:323px;top:251px;width:1px;height:484px;background:#d9d9d9"></div>
<div class="a" style="left:387px;top:251px;width:1px;height:484px;background:#d9d9d9"></div>
<div class="a" style="left:451px;top:251px;width:1px;height:484px;background:#d9d9d9"></div>
<div class="a" style="left:515px;top:251px;width:1px;height:484px;background:#d9d9d9"></div>
<div class="a" style="left:579px;top:251px;width:1px;height:484px;background:#d9d9d9"></div>
<div class="a" style="left:643px;top:251px;width:1px;height:484px;background:#d9d9d9"></div>
<div class="a" style="left:707px;top:251px;width:1px;height:484px;background:#d9d9d9"></div>
<div class="a" style="left:771px;top:251px;width:1px;height:484px;background:#d9d9d9"></div>
<div class="a" style="left:835px;top:251px;width:1px;height:484px;background:#d9d9d9"></div>
<div class="a" style="left:56px;top:270px;width:835px;height:1px;background:#d9d9d9"></div>
<div class="a" style="left:56px;top:290px;width:835px;height:1px;background:#d9d9d9"></div>
<div class="a" style="left:56px;top:310px;width:835px;height:1px;background:#d9d9d9"></div>
<div class="a" style="left:56px;top:330px;width:835px;height:1px;background:#d9d9d9"></div>
<div class="a" style="left:56px;top:350px;width:835px;height:1px;background:#d9d9d9"></div>
<div class="a" style="left:56px;top:370px;width:835px;height:1px;background:#d9d9d9"></div>
<div class="a" style="left:56px;top:390px;width:835px;height:1px;background:#d9d9d9"></div>
<div class="a" style="left:56px;top:410px;width:835px;height:1px;background:#d9d9d9"></div>
<div class="a" style="left:56px;top:430px;width:835px;height:1px;background:#d9d9d9"></div>
<div class="a" style="left:56px;top:450px;width:835px;height:1px;background:#d9d9d9"></div>
<div class="a" style="left:56px;top:470px;width:835px;height:1px;background:#d9d9d9"></div>
<div class="a" style="left:56px;top:490px;width:835px;height:1px;background:#d9d9d9"></div>
<div class="a" style="left:56px;top:510px;width:835px;height:1px;background:#d9d9d9"></div>
<div class="a" style="left:56px;top:530px;width:835px;height:1px;background:#d9d9d9"></div>
<div class="a" style="left:56px;top:550px;width:835px;height:1px;background:#d9d9d9"></div>
<div class="a" style="left:56px;top:570px;width:835px;height:1px;background:#d9d9d9"></div>
<div class="a" style="left:56px;top:590px;width:835px;height:1px;background:#d9d9d9"></div>
<div class="a" style="left:56px;top:610px;width:835px;height:1px;background:#d9d9d9"></div>
<div class="a" style="left:56px;top:630px;width:835px;height:1px;background:#d9d9d9"></div>
<div class="a" style="left:56px;top:650px;width:835px;height:1px;background:#d9d9d9"></div>
<div class="a" style="left:56px;top:670px;width:835px;height:1px;background:#d9d9d9"></div>
<div class="a" style="left:56px;top:690px;width:835px;height:1px;background:#d9d9d9"></div>
<div class="a" style="left:56px;top:710px;width:835px;height:1px;background:#d9d9d9"></div>
<div class="a" style="left:56px;top:730px;width:835px;height:1px;background:#d9d9d9"></div>
<div class="a" style="left:891px;top:251px;width:1px;height:485px;background:#9e9e9e"></div>
<div class="a" style="left:32px;top:735px;width:860px;height:1px;background:#9e9e9e"></div>
<div class="a" style="left:150px;top:251px;width:1px;height:260px;background:#000"></div>
<div class="a" style="left:242px;top:251px;width:1px;height:260px;background:#000"></div>
<div class="a" style="left:323px;top:251px;width:1px;height:260px;background:#000"></div>
<div class="a" style="left:56px;top:270px;width:268px;height:1px;background:#000"></div>
<div class="a" style="left:56px;top:290px;width:268px;height:1px;background:#000"></div>
<div class="a" style="left:56px;top:310px;width:268px;height:1px;background:#000"></div>
<div class="a" style="left:56px;top:330px;width:268px;height:1px;background:#000"></div>
<div class="a" style="left:56px;top:350px;width:268px;height:1px;background:#000"></div>
<div class="a" style="left:56px;top:370px;width:268px;height:1px;background:#000"></div>
<div class="a" style="left:56px;top:390px;width:268px;height:1px;background:#000"></div>
<div class="a" style="left:56px;top:410px;width:268px;height:1px;background:#000"></div>
<div class="a" style="left:56px;top:430px;width:268px;height:1px;background:#000"></div>
<div class="a" style="left:56px;top:450px;width:268px;height:1px;background:#000"></div>
<div class="a" style="left:56px;top:470px;width:268px;height:1px;background:#000"></div>
<div class="a" style="left:56px;top:490px;width:268px;height:1px;background:#000"></div>
<div class="a" style="left:56px;top:510px;width:268px;height:1px;background:#000"></div>
<div class="t" style="left:58.5px;top:255px;font-size:13px;color:#000;">Месяц</div>
<div class="t" style="left:153px;top:255px;font-size:13px;color:#000;">Продано</div>
<div class="t" style="left:244.5px;top:255px;font-size:13px;color:#000;">Прибыль</div>
<div class="t" style="left:58.5px;top:275px;font-size:13px;color:#000;">Янв</div>
<div class="t" style="right:704px;top:275px;font-size:13px;color:#000;">14</div>
<div class="t" style="right:623px;top:275px;font-size:13px;color:#000;">54234</div>
<div class="t" style="left:58.5px;top:295px;font-size:13px;color:#000;">Фвр</div>
<div class="t" style="right:704px;top:295px;font-size:13px;color:#000;">17</div>
<div class="t" style="right:623px;top:295px;font-size:13px;color:#000;">76345</div>
<div class="t" style="left:58.5px;top:315px;font-size:13px;color:#000;">Март</div>
<div class="t" style="right:704px;top:315px;font-size:13px;color:#000;">26</div>
<div class="t" style="right:623px;top:315px;font-size:13px;color:#000;">45234</div>
<div class="t" style="left:58.5px;top:335px;font-size:13px;color:#000;">Апр</div>
<div class="t" style="right:704px;top:335px;font-size:13px;color:#000;">78</div>
<div class="t" style="right:623px;top:335px;font-size:13px;color:#000;">178000</div>
<div class="t" style="left:58.5px;top:355px;font-size:13px;color:#000;">Май</div>
<div class="t" style="right:704px;top:355px;font-size:13px;color:#000;">3</div>
<div class="t" style="right:623px;top:355px;font-size:13px;color:#000;">4523</div>
<div class="t" style="left:58.5px;top:375px;font-size:13px;color:#000;">Июнь</div>
<div class="t" style="right:704px;top:375px;font-size:13px;color:#000;">15</div>
<div class="t" style="right:623px;top:375px;font-size:13px;color:#000;">53412</div>
<div class="t" style="left:58.5px;top:395px;font-size:13px;color:#000;">Июль</div>
<div class="t" style="right:704px;top:395px;font-size:13px;color:#000;">43</div>
<div class="t" style="right:623px;top:395px;font-size:13px;color:#000;">78045</div>
<div class="t" style="left:58.5px;top:415px;font-size:13px;color:#000;">Авг</div>
<div class="t" style="right:704px;top:415px;font-size:13px;color:#000;">27</div>
<div class="t" style="right:623px;top:415px;font-size:13px;color:#000;">45234</div>
<div class="t" style="left:58.5px;top:435px;font-size:13px;color:#000;">Сент</div>
<div class="t" style="right:704px;top:435px;font-size:13px;color:#000;">28</div>
<div class="t" style="right:623px;top:435px;font-size:13px;color:#000;">97621</div>
<div class="t" style="left:58.5px;top:455px;font-size:13px;color:#000;">Окт</div>
<div class="t" style="right:704px;top:455px;font-size:13px;color:#000;">31</div>
<div class="t" style="right:623px;top:455px;font-size:13px;color:#000;">4512</div>
<div class="t" style="left:58.5px;top:475px;font-size:13px;color:#000;">Нбр</div>
<div class="t" style="right:704px;top:475px;font-size:13px;color:#000;">78</div>
<div class="t" style="right:623px;top:475px;font-size:13px;color:#000;">245967</div>
<div class="t" style="left:58.5px;top:495px;font-size:13px;color:#000;">Дкбр</div>
<div class="t" style="right:704px;top:495px;font-size:13px;color:#000;">134</div>
<div class="t" style="right:623px;top:495px;font-size:13px;color:#000;">234512</div>
<div class="t" style="right:494.5px;top:315px;font-size:13px;color:#000;">31</div>
<div class="t" style="right:494.5px;top:335px;font-size:13px;color:#000;">43</div>
<div class="a" style="left:386px;top:289px;width:67px;height:2px;background:#217346"></div>
<div class="a" style="left:386px;top:289px;width:2px;height:22px;background:#217346"></div>
<div class="a" style="left:451px;top:289px;width:2px;height:22px;background:#217346"></div>
<svg class="a" style="left:386px;top:310px;" width="67" height="21" viewBox="0 0 67 21"><path d="M1 1H66M1 20H66" stroke="#217346" stroke-width="2" stroke-dasharray="7 2"/><path d="M2 1V20M66 1V20" stroke="#217346" stroke-width="2" stroke-dasharray="7 2" stroke-dashoffset="-2"/></svg>
<div class="a" style="left:450px;top:309px;width:4px;height:4px;background:#217346"></div>
<div class="a" style="left:895px;top:233px;width:15px;height:15px;background:#fff;border:1px solid #ababab"></div>
<svg class="a" style="left:899px;top:238px;" width="8" height="5" viewBox="0 0 8 5"><path d="M0 5H8L4 0Z" fill="#6d6d6d"/></svg>
<div class="a" style="left:895px;top:248px;width:15px;height:453px;background:#fff;border:1px solid #ababab"></div>
<div class="a" style="left:896px;top:701px;width:13px;height:20px;background:#dadada"></div>
<div class="a" style="left:895px;top:721px;width:15px;height:15px;background:#fff;border:1px solid #ababab"></div>
<svg class="a" style="left:899px;top:726px;" width="8" height="5" viewBox="0 0 8 5"><path d="M0 0H8L4 5Z" fill="#6d6d6d"/></svg>
<div class="a" style="left:32px;top:736px;width:880px;height:27px;background:#e6e6e6"></div>
<svg class="a" style="left:57px;top:745px;" width="4" height="7" viewBox="0 0 4 7"><path d="M4 0V7L0 3.5Z" fill="#c0c0c0"/></svg>
<svg class="a" style="left:86px;top:745px;" width="4" height="7" viewBox="0 0 4 7"><path d="M0 0V7L4 3.5Z" fill="#c0c0c0"/></svg>
<div class="a" style="left:130px;top:735px;width:60px;height:25px;background:#fff;border-left:1px solid #ababab;border-right:1px solid #ababab"></div>
<div class="a" style="left:130px;top:758px;width:60px;height:2px;background:#217346"></div>
<div class="t" id="tw25" style="left:-40.400000000000006px;width:400px;text-align:center;top:742px;font-size:13px;color:#217346;font-weight:bold;letter-spacing:-0.750px">Лист1</div>
<svg class="a" style="left:223px;top:741px;" width="16" height="16" viewBox="0 0 16 16"><circle cx="8" cy="8" r="7.2" fill="none" stroke="#777" stroke-width="1.2"/><path d="M8 4V12M4 8H12" stroke="#777" stroke-width="1.6"/></svg>
<div class="a" style="left:561px;top:745px;width:2px;height:2px;background:#9a9a9a"></div>
<div class="a" style="left:561px;top:749px;width:2px;height:2px;background:#9a9a9a"></div>
<div class="a" style="left:561px;top:753px;width:2px;height:2px;background:#9a9a9a"></div>
<div class="a" style="left:577px;top:742px;width:15px;height:15px;background:#fff;border:1px solid #ababab"></div>
<svg class="a" style="left:582px;top:746px;" width="4" height="7" viewBox="0 0 4 7"><path d="M4 0V7L0 3.5Z" fill="#6d6d6d"/></svg>
<div class="a" style="left:592px;top:742px;width:259px;height:15px;background:#fff;border:1px solid #ababab"></div>
<div class="a" style="left:851px;top:743px;width:26px;height:13px;background:#dadada"></div>
<div class="a" style="left:877px;top:742px;width:15px;height:15px;background:#fff;border:1px solid #ababab"></div>
<svg class="a" style="left:883px;top:746px;" width="4" height="7" viewBox="0 0 4 7"><path d="M0 0V7L4 3.5Z" fill="#6d6d6d"/></svg>
<div class="t" id="tw26" style="left:37px;top:770px;font-size:11.5px;color:#333;;letter-spacing:-0.038px">Укажите ячейку и нажмите ВВОД или выберите "Вставить"</div>
<div class="a" style="left:599px;top:764px;width:40px;height:18px;background:#c8c8c8"></div>
<svg class="a" style="left:612px;top:767px;" width="13" height="13" viewBox="0 0 13 13"><rect x="0.5" y="0.5" width="12" height="12" fill="none" stroke="#6d6d6d"/><path d="M4.5 0.5V12.5M8.5 0.5V12.5M0.5 4.5H12.5M0.5 8.5H12.5" stroke="#6d6d6d"/></svg>
<svg class="a" style="left:652px;top:767px;" width="14" height="13" viewBox="0 0 14 13"><rect x="0.5" y="0.5" width="13" height="12" fill="none" stroke="#6d6d6d"/><rect x="3.5" y="2.5" width="7" height="8" fill="none" stroke="#6d6d6d"/><path d="M5 4.5H9M5 6.5H9M5 8.5H9" stroke="#6d6d6d"/></svg>
<svg class="a" style="left:692px;top:767px;" width="14" height="13" viewBox="0 0 14 13"><rect x="0.5" y="0.5" width="13" height="12" fill="none" stroke="#6d6d6d"/><path d="M3.5 0.5V7.5M6.5 0.5V7.5M0.5 7.5H8.5V0.5" fill="none" stroke="#6d6d6d"/></svg>
<div class="a" style="left:725px;top:773px;width:8px;height:1px;background:#444"></div>
<div class="a" style="left:738px;top:774px;width:100px;height:1px;background:#a8a8a8"></div>
<div class="a" style="left:786px;top:769px;width:5px;height:11px;background:#6d6d6d"></div>
<svg class="a" style="left:843px;top:769px;" width="9" height="9" viewBox="0 0 9 9"><path d="M4.5 0V9M0 4.5H9" stroke="#444" stroke-width="1"/></svg>
<div class="t" id="tw27" style="left:864.6px;top:769px;font-size:11.5px;color:#333;;letter-spacing:-0.675px">100 %</div>
<div class="a" style="left:306px;top:375px;width:273px;height:140px;box-shadow:0 0 12px 3px rgba(0,0,0,0.18),2px 4px 10px rgba(0,0,0,0.12)"></div>
<div class="a" style="left:306px;top:375px;width:273px;height:140px;background:#f0f0f0;border:1px solid #777"></div>
<div class="a" style="left:307px;top:376px;width:271px;height:30px;background:#fff"></div>
<div class="t" id="tw28" style="left:315.7px;top:385px;font-size:12.5px;color:#000;;letter-spacing:-0.354px">Вставка скопированных ячеек</div>
<div class="t" style="left:310px;width:400px;text-align:center;top:383px;font-size:14px;color:#000;">?</div>
<svg class="a" style="left:550px;top:385px;" width="11" height="11" viewBox="0 0 11 11"><path d="M0.5 0.5L10.5 10.5M10.5 0.5L0.5 10.5" stroke="#111" stroke-width="1.1"/></svg>
<div class="t" id="tw29" style="left:313.2px;top:414px;font-size:12.5px;color:#000;;letter-spacing:-0.750px">Добавить</div>
<div class="a" style="left:370px;top:419px;width:202px;height:1px;background:#dcdcdc"></div>
<svg class="a" style="left:321px;top:433px;" width="14" height="14" viewBox="0 0 14 14"><circle cx="7" cy="7" r="6" fill="#fff" stroke="#333" stroke-width="1"/></svg>
<svg class="a" style="left:321px;top:453px;" width="14" height="14" viewBox="0 0 14 14"><circle cx="7" cy="7" r="6" fill="#fff" stroke="#333" stroke-width="1"/><circle cx="7" cy="7" r="3.5" fill="#333"/></svg>
<div class="t" id="tw30" style="left:339.2px;top:434px;font-size:12.5px;color:#000;;letter-spacing:-0.496px">диапазон, со сдвигом в<u>п</u>раво</div>
<div class="t" id="tw31" style="left:339.2px;top:454px;font-size:12.5px;color:#000;;letter-spacing:-0.554px">диапазон, со сдвигом в<u>н</u>из</div>
<div class="a" style="left:337px;top:452px;width:149px;height:16px;border:1px dotted #000"></div>
<div class="a" style="left:413px;top:484px;width:74px;height:22px;background:#e1e1e1;border:2px solid #0078d7"></div>
<div class="t" id="tw32" style="left:249.89999999999998px;width:400px;text-align:center;top:489px;font-size:12.5px;color:#000;;letter-spacing:-0.750px">OK</div>
<div class="a" style="left:497px;top:484px;width:74px;height:22px;background:#e1e1e1;border:1px solid #adadad"></div>
<div class="t" id="tw33" style="left:333.9px;width:400px;text-align:center;top:489px;font-size:12.5px;color:#000;;letter-spacing:-0.750px">Отмена</div>
<div class="a" style="left:310px;top:426px;width:217px;height:49px;border:5px solid #ff0000;border-radius:11px;box-shadow:2px 3px 5px rgba(0,0,0,0.35), inset 2px 3px 5px rgba(0,0,0,0.3)"></div>
</body></html>
